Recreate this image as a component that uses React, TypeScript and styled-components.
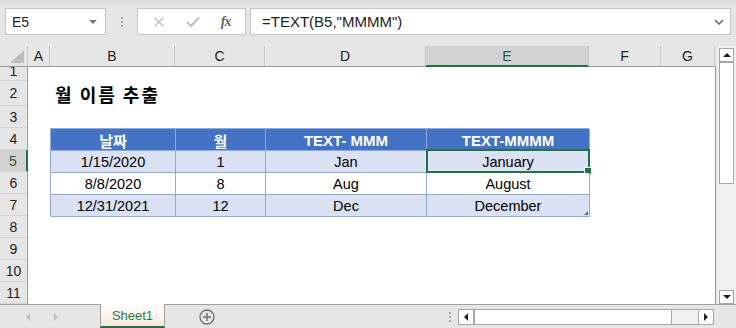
import React from 'react';
import styled, { createGlobalStyle } from 'styled-components';

const Global = createGlobalStyle`
  html, body { margin: 0; padding: 0; }
  body {
    width: 736px; height: 328px; overflow: hidden; background: #e6e6e6;
    font-family: "Liberation Sans", "Noto Sans CJK KR", sans-serif;
  }
`;

const COLS = [
  { name: 'A', w: 22 },
  { name: 'B', w: 125 },
  { name: 'C', w: 90 },
  { name: 'D', w: 161 },
  { name: 'E', w: 163 },
  { name: 'F', w: 72 },
  { name: 'G', w: 54 },
];
const ROWS = [14, 25, 22, 22, 22, 22, 22, 22, 22, 22, 22];

const Page = styled.div`
  display: flex; flex-direction: column; width: 736px; height: 328px;
`;

const Toolbar = styled.div`
  height: 46px; display: flex; align-items: flex-start; padding: 8px 5px 0 5px;
  box-sizing: border-box;
  background: linear-gradient(#dcdcdc 0px, #e6e6e6 6px);
`;

const NameBox = styled.div`
  width: 101px; height: 27px; box-sizing: border-box; background: #fff;
  border: 1px solid #c6c6c6; display: flex; align-items: center; justify-content: space-between;
  padding: 0 6px 0 6px; font-size: 14px; color: #222;
`;

const Caret = styled.span`
  width: 0; height: 0; border-left: 4px solid transparent; border-right: 4px solid transparent;
  border-top: 4px solid #777; margin-right: 2px;
`;

const Grip = styled.div`
  width: 31px; height: 27px; display: flex; flex-direction: column; align-items: center;
  justify-content: center; gap: 2px;
  span { width: 2px; height: 2px; background: #a8a8a8; }
`;

const FxBox = styled.div`
  width: 109px; height: 27px; box-sizing: border-box; background: #fff;
  border: 1px solid #c6c6c6; display: flex; align-items: center; justify-content: space-around;
  padding: 0 4px;
`;

const FxLabel = styled.span`
  font-family: "Liberation Serif", serif; font-style: italic; font-size: 14px; color: #666;
  font-weight: bold; letter-spacing: -1px;
`;

const Formula = styled.div`
  flex: 1; margin-left: 4px; height: 27px; box-sizing: border-box; background: #fff;
  border: 1px solid #c6c6c6; display: flex; align-items: center; justify-content: space-between;
  padding: 0 6px 0 11px; font-size: 15px; color: #222;
`;

const Main = styled.div`
  display: flex; height: 258px;
`;

const Sheet = styled.div`
  width: 716px; display: grid; position: relative;
  grid-template-columns: 28px ${COLS.map((c) => c.w + 'px').join(' ')} 1px;
  grid-template-rows: 21px ${ROWS.map((r) => r + 'px').join(' ')};
  background: #fff;
`;

const Corner = styled.div`
  grid-column: 1; grid-row: 1; background: #e6e6e6; border-right: 1px solid #c6c6c6;
  border-bottom: 1px solid #9b9b9b; box-sizing: border-box; display: flex;
  align-items: flex-end; justify-content: flex-end; padding: 0 3px 3px 0;
`;

const ColHead = styled.div<{ $sel?: boolean }>`
  grid-row: 1; box-sizing: border-box; background: ${(p) => (p.$sel ? '#d2d2d2' : '#e6e6e6')};
  border-right: 1px solid #c6c6c6;
  border-bottom: ${(p) => (p.$sel ? '2px solid #217346' : '1px solid #9b9b9b')};
  display: flex; align-items: center; justify-content: center; font-size: 14px;
  color: ${(p) => (p.$sel ? '#1e5e3a' : '#222')}; padding-top: ${(p) => (p.$sel ? '1px' : '0')};
`;

const HeadFill = styled.div`
  grid-row: 1; background: #e6e6e6; border-bottom: 1px solid #9b9b9b; box-sizing: border-box;
`;

const RowHead = styled.div<{ $sel?: boolean; $top?: boolean }>`
  grid-column: 1; box-sizing: border-box; background: ${(p) => (p.$sel ? '#d2d2d2' : '#e6e6e6')};
  border-right: ${(p) => (p.$sel ? '2px solid #217346' : '1px solid #9b9b9b')};
  border-bottom: 1px solid #d4d4d4; overflow: hidden;
  display: flex; align-items: ${(p) => (p.$top ? 'flex-end' : 'center')}; justify-content: center;
  font-size: 14px; color: ${(p) => (p.$sel ? '#1e5e3a' : '#222')};
  line-height: ${(p) => (p.$top ? '9px' : 'normal')};
  padding-bottom: ${(p) => (p.$top ? '4px' : '0')};
`;

const RightEdge = styled.div`
  grid-column: 9; grid-row: 2 / span 11; background: #9b9b9b;
`;

const Title = styled.div`
  grid-column: 3 / span 3; grid-row: 3; align-self: center; padding-left: 5px;
  font-family: "Noto Sans CJK KR", sans-serif; font-weight: bold; font-size: 18px; color: #000;
  letter-spacing: 2px;
`;

const Table = styled.div`
  grid-column: 3 / 7; grid-row: 5 / 9; display: grid;
  grid-template-columns: 125px 90px 161px 163px; grid-template-rows: repeat(4, 22px);
  box-sizing: border-box; border-left: 1px solid #8ea9db; border-top: 1px solid #8ea9db;
  position: relative;
`;

const Cell = styled.div<{ $head?: boolean; $band?: boolean }>`
  box-sizing: border-box; border-right: 1px solid #8ea9db;
  border-bottom: 1px solid #8ea9db;
  background: ${(p) => (p.$head ? '#4472c4' : p.$band ? '#d9e1f2' : '#fff')};
  color: ${(p) => (p.$head ? '#fff' : '#000')};
  font-weight: ${(p) => (p.$head ? 'bold' : 'normal')};
  font-size: ${(p) => (p.$head ? '15px' : '14.5px')};
  display: flex; align-items: center; justify-content: center;
  position: relative; padding-top: 1px;
`;

const Selection = styled.div`
  position: absolute; left: -1px; top: -2px; right: -1px; bottom: -1px;
  border: 2px solid #217346; pointer-events: none;
`;

const FillHandle = styled.div`
  position: absolute; right: -4px; bottom: -4px; width: 6px; height: 6px;
  background: #217346; border: 1px solid #fff;
`;

const ResizeMark = styled.div`
  position: absolute; right: 1px; bottom: 1px; width: 0; height: 0;
  border-left: 4px solid transparent; border-bottom: 4px solid #4472c4;
`;

const VScroll = styled.div`
  width: 20px; background: #f0f0f0; display: flex; flex-direction: column; align-items: center;
  padding-top: 2px; box-sizing: border-box; border-left: 1px solid #e6e6e6;
`;

const ScrollBtn = styled.div<{ $w?: number; $h?: number }>`
  width: ${(p) => p.$w ?? 15}px; height: ${(p) => p.$h ?? 14}px; box-sizing: border-box;
  background: #fff; border: 1px solid #a6a6a6; display: flex; align-items: center;
  justify-content: center; flex: none;
`;

const VThumb = styled.div`
  width: 15px; height: 123px; box-sizing: border-box; background: #fff;
  border: 1px solid #a6a6a6; border-top-width: 2px; margin-top: -1px;
`;

const Spacer = styled.div`
  flex: 1;
`;

const Tri = styled.span<{ $dir: 'up' | 'down' | 'left' | 'right'; $c?: string; $s?: number }>`
  width: 0; height: 0;
  ${(p) => {
    const s = p.$s ?? 4;
    const c = p.$c ?? '#222';
    switch (p.$dir) {
      case 'up':
        return `border-left:${s}px solid transparent;border-right:${s}px solid transparent;border-bottom:${s}px solid ${c};`;
      case 'down':
        return `border-left:${s}px solid transparent;border-right:${s}px solid transparent;border-top:${s}px solid ${c};`;
      case 'left':
        return `border-top:${s}px solid transparent;border-bottom:${s}px solid transparent;border-right:${s}px solid ${c};`;
      default:
        return `border-top:${s}px solid transparent;border-bottom:${s}px solid transparent;border-left:${s}px solid ${c};`;
    }
  }}
`;

const TabBar = styled.div`
  height: 24px; display: flex; align-items: stretch; background: #e6e6e6;
  border-top: 1px solid #a0a0a0; box-sizing: border-box; position: relative;
`;

const NavArea = styled.div`
  width: 100px; display: flex; align-items: center; padding-left: 26px; gap: 24px;
  box-sizing: border-box;
`;

const SheetTab = styled.div`
  width: 65px; margin-top: -1px; box-sizing: border-box;
  background: linear-gradient(#ffffff, #fbe9dd);
  border-left: 1px solid #a0a0a0; border-right: 1px solid #a0a0a0;
  border-bottom: 2px solid #217346;
  display: flex; align-items: center; justify-content: center;
  font-size: 13px; color: #2a7a52;
`;

const AddBtn = styled.div`
  width: 84px; display: flex; align-items: center; justify-content: center;
`;

const Dots = styled.div`
  width: 16px; display: flex; flex-direction: column; align-items: center; justify-content: center; gap: 2px;
  span { width: 2px; height: 2px; background: #a8a8a8; }
`;

const HScroll = styled.div`
  width: 256px; height: 16px; align-self: center; display: flex; box-sizing: border-box;
  border: 1px solid #a6a6a6; background: #f0f0f0;
`;

const HBtn = styled.div`
  width: 14px; height: 14px; background: #fff; display: flex; align-items: center; justify-content: center;
  flex: none;
`;

const HThumb = styled.div`
  width: 199px; box-sizing: border-box; background: #fff; border-left: 2px solid #a6a6a6;
  border-right: 1px solid #a6a6a6;
`;

const HRightBtn = styled(HBtn)`
  margin-left: auto; border-left: 1px solid #a6a6a6;
`;

const TabEnd = styled.div`
  width: 22px;
`;

const data = [
  ['1/15/2020', '1', 'Jan', 'January'],
  ['8/8/2020', '8', 'Aug', 'August'],
  ['12/31/2021', '12', 'Dec', 'December'],
];

export default function App() {
  return (
    <Page>
      <Global />
      <Toolbar>
        <NameBox>
          <span>E5</span>
          <Caret />
        </NameBox>
        <Grip>
          <span />
          <span />
          <span />
        </Grip>
        <FxBox>
          <svg width="12" height="12" viewBox="0 0 12 12">
            <path d="M1.5 1.5 L10.5 10.5 M10.5 1.5 L1.5 10.5" stroke="#bdbdbd" strokeWidth="1.3" fill="none" />
          </svg>
          <svg width="14" height="12" viewBox="0 0 14 12">
            <path d="M1 6 L5 10 L13 1.5" stroke="#bdbdbd" strokeWidth="2" fill="none" />
          </svg>
          <FxLabel>fx</FxLabel>
        </FxBox>
        <Formula>
          <span>=TEXT(B5,"MMMM")</span>
          <svg width="10" height="6" viewBox="0 0 10 6">
            <path d="M1 1 L5 5 L9 1" stroke="#666" strokeWidth="1.5" fill="none" />
          </svg>
        </Formula>
      </Toolbar>
      <Main>
        <Sheet>
          <Corner>
            <svg width="14" height="13" viewBox="0 0 14 13">
              <polygon points="14,0 14,13 0,13" fill="#bdbdbd" />
            </svg>
          </Corner>
          {COLS.map((c) => (
            <ColHead key={c.name} $sel={c.name === 'E'}>
              {c.name}
            </ColHead>
          ))}
          <HeadFill />
          {ROWS.map((_, i) => (
            <RowHead key={i} style={{ gridRow: i + 2 }} $sel={i === 4} $top={i === 0}>
              {i + 1}
            </RowHead>
          ))}
          <RightEdge />
          <Title>월 이름 추출</Title>
          <Table>
            <Cell $head>날짜</Cell>
            <Cell $head>월</Cell>
            <Cell $head>TEXT- MMM</Cell>
            <Cell $head>TEXT-MMMM</Cell>
            {data.map((row, r) =>
              row.map((v, c) => (
                <Cell key={`${r}-${c}`} $band={r !== 1}>
                  {v}
                  {r === 0 && c === 3 && (
                    <Selection>
                      <FillHandle />
                    </Selection>
                  )}
                  {r === 2 && c === 3 && <ResizeMark />}
                </Cell>
              ))
            )}
          </Table>
        </Sheet>
        <VScroll>
          <ScrollBtn>
            <Tri $dir="up" />
          </ScrollBtn>
          <VThumb />
          <Spacer />
          <ScrollBtn $h={14}>
            <Tri $dir="down" />
          </ScrollBtn>
        </VScroll>
      </Main>
      <TabBar>
        <NavArea>
          <Tri $dir="left" $c="#c0c0c0" />
          <Tri $dir="right" $c="#c0c0c0" />
        </NavArea>
        <SheetTab>Sheet1</SheetTab>
        <AddBtn>
          <svg width="16" height="16" viewBox="0 0 16 16">
            <circle cx="8" cy="8" r="7" stroke="#707070" strokeWidth="1.3" fill="none" />
            <path d="M8 4 V12 M4 8 H12" stroke="#707070" strokeWidth="1.5" />
          </svg>
        </AddBtn>
        <Spacer />
        <Dots>
          <span />
          <span />
          <span />
        </Dots>
        <HScroll>
          <HBtn>
            <Tri $dir="left" />
          </HBtn>
          <HThumb />
          <HRightBtn>
            <Tri $dir="right" />
          </HRightBtn>
        </HScroll>
        <TabEnd />
      </TabBar>
    </Page>
  );
}
